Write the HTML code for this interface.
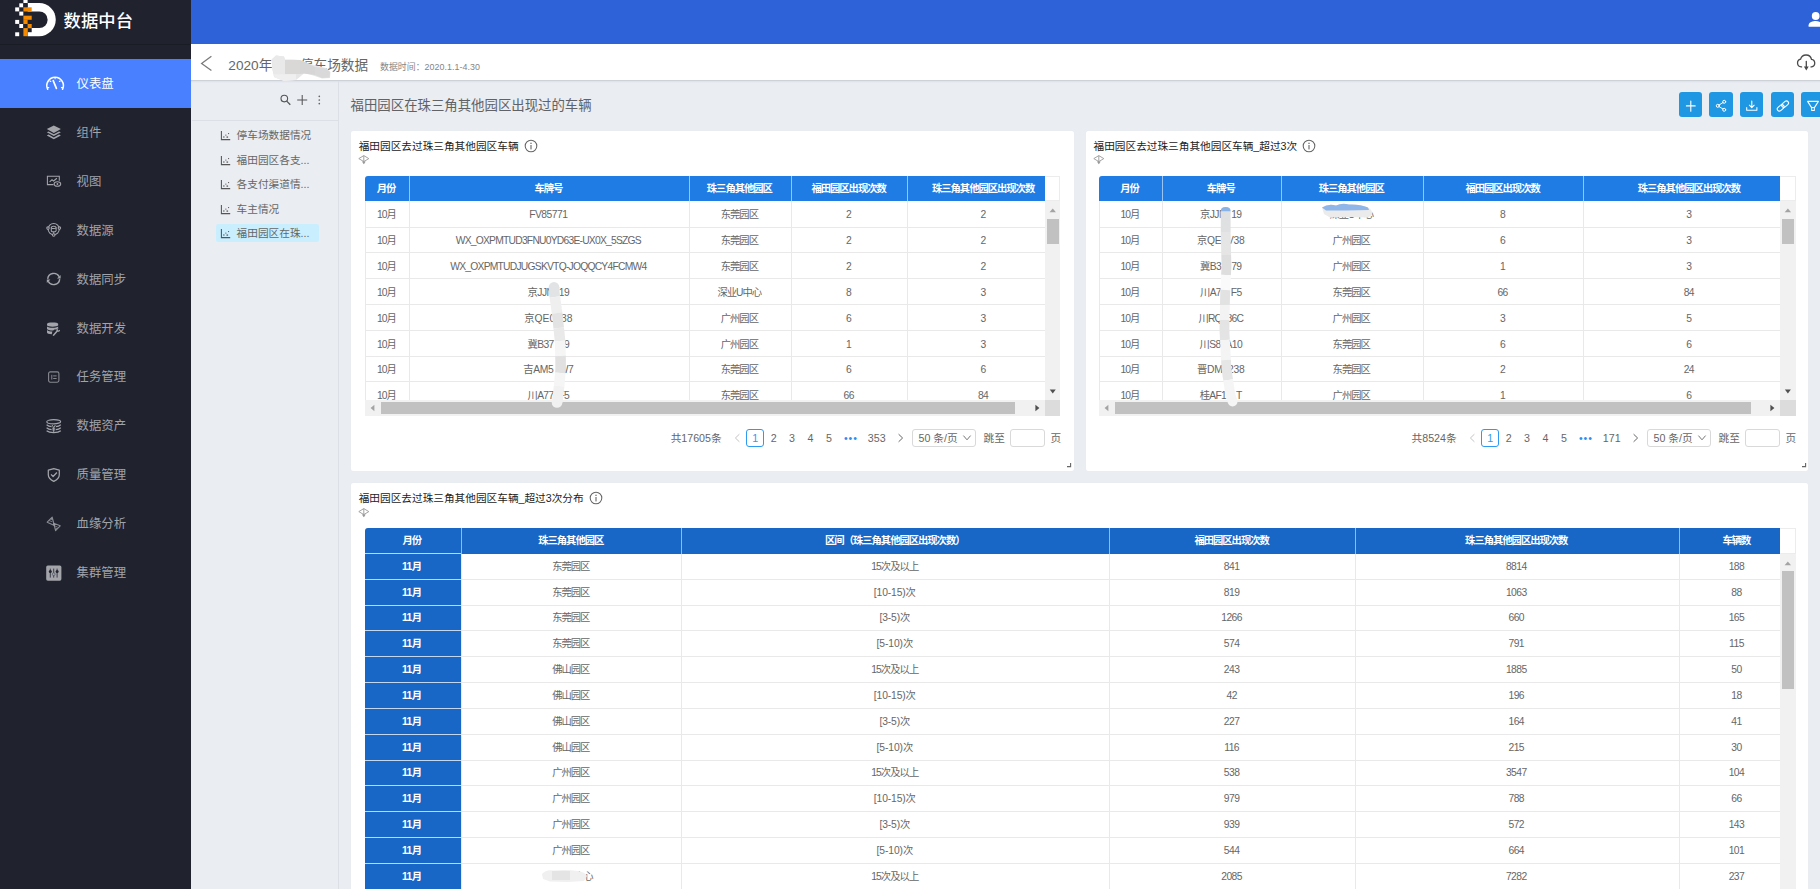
<!DOCTYPE html><html lang="zh-CN"><head><meta charset="utf-8"><title>数据中台</title><style>
*{box-sizing:border-box;margin:0;padding:0}
html,body{width:1820px;height:889px;overflow:hidden}
body{position:relative;background:#eaedf2;font-family:"Liberation Sans","Noto Sans CJK SC",sans-serif;color:#666;-webkit-font-smoothing:antialiased}
.abs{position:absolute}
#side{left:0;top:0;width:191px;height:889px;background:#20222e}
#logoline{left:0;top:44px;width:191px;height:1px;background:#191b25}
#logotxt{left:63.5px;top:7.5px;font-size:17.3px;line-height:26px;color:#fff;font-weight:500;letter-spacing:0.1px;white-space:nowrap}
.mi{left:0;width:191px;height:49px;color:#a1a3aa;font-size:12.4px;line-height:49px;white-space:nowrap}
.mi span{position:absolute;left:76.5px;top:1px}
.mi.on{background:#4880ff;color:#fff}
.mi svg{position:absolute;left:44px;top:14.5px;width:20px;height:20px;overflow:visible}
#top{left:191px;top:0;width:1629px;height:44px;background:#2e62d8}
#hdr{left:191px;top:44px;width:1629px;height:37px;background:#fff;border-bottom:1px solid #cdd1d8}
#hdrshadow{left:191px;top:81px;width:1629px;height:2px;background:linear-gradient(#dde0e6,#eaedf2)}
#ttl{left:228.3px;top:55.8px;font-size:13.65px;line-height:20px;color:#666;white-space:nowrap}
#ttl2{left:380px;top:59.6px;font-size:8.9px;line-height:14px;color:#858585;white-space:nowrap;letter-spacing:0.05px}
#sub{left:191px;top:81px;width:148px;height:808px;border-right:1px solid #dcdfe5}
#subline{left:192px;top:120px;width:146px;height:1px;background:#dcdfe5}
.si{left:216px;width:103px;height:18px;font-size:10.67px;line-height:18px;color:#666;white-space:nowrap;border-radius:2px}
.si.on{background:#c9efff}
.si svg{position:absolute;left:4px;top:4px;width:11px;height:11px;overflow:visible}
.si span{position:absolute;left:20.6px;top:0}
#mt{left:350.6px;top:95.9px;font-size:13.4px;line-height:20px;color:#606266;white-space:nowrap}
.btn{top:92.4px;width:23.6px;height:24.8px;border-radius:3px;background:#1f97e2}
.btn svg{position:absolute;left:0;top:0;width:100%;height:100%;overflow:visible}
.card{background:#fff;border-radius:2px;box-shadow:0 0 1px rgba(0,0,0,0.06)}
.ct{font-size:10.67px;line-height:16px;color:#222;white-space:nowrap}
.tb{overflow:hidden;font-size:10.3px;letter-spacing:-1px;color:#666}
.tb .l{letter-spacing:-0.55px}
.tb .r{position:absolute;left:0;border-bottom:1px solid #e9e9e9}
.tb .h{position:absolute;color:#fff;font-weight:bold;text-align:center;white-space:nowrap;overflow:hidden;padding-right:2.4px}
.tb .c{position:absolute;top:0;height:100%;text-align:center;white-space:nowrap;border-left:1px solid #e9e9e9;padding-right:2.4px}
.tb .c.b{color:#fff;font-weight:bold;border-left:0;height:calc(100% + 1px);border-bottom:1px solid #c3d6ef;letter-spacing:-0.45px}
.pg{font-size:10.67px;line-height:19.8px;color:#666;white-space:nowrap;height:17.6px}
.pg .it{position:absolute;top:0;text-align:center}
.smg{pointer-events:none}
</style></head><body>
<div id="side" class="abs"></div>
<div id="logoline" class="abs"></div>
<svg class="abs" style="left:0;top:0" width="64" height="44" viewBox="0 0 64 44">
<path d="M27.6 3.1H39.2A16.55 16.55 0 0 1 39.2 36.2H27.6Z" fill="#fff"/>
<path d="M23.3 11.4H39.3A8.3 8.3 0 0 1 39.3 28.1H23.3Z" fill="#20222e"/>
<g fill="#fff">
<rect x="23.4" y="-1" width="4.2" height="4.1"/>
<rect x="19.3" y="3.3" width="4" height="4"/>
<rect x="15.2" y="7.4" width="4" height="4"/>
<rect x="19.3" y="11.6" width="4" height="4"/>
<rect x="15.2" y="19.9" width="4" height="4"/>
<rect x="19.3" y="24" width="4" height="4"/>
<rect x="15.2" y="32.3" width="4" height="3.9"/>
</g>
<g fill="#20222e">
<rect x="23.4" y="3.1" width="4.2" height="4.2"/>
<rect x="27.6" y="28.1" width="4.1" height="4.1"/>
<rect x="23.4" y="24" width="4.2" height="4.1"/>
</g>
<g fill="#f58a00">
<rect x="23.4" y="7.3" width="8.3" height="4.2"/>
<rect x="23.4" y="15.7" width="8.3" height="4.1"/>
<rect x="23.4" y="19.8" width="4.2" height="4.2"/>
<rect x="27.6" y="24" width="4.1" height="4.1"/>
<rect x="23.4" y="28.1" width="4.2" height="8.1"/>
</g>
</svg>
<div id="logotxt" class="abs">数据中台</div>
<div class="abs mi on" style="top:59.0px"><svg viewBox="0 0 20 20"><g transform="translate(0.1,-0.6) scale(1,1)"><g fill="none" stroke="#fff" stroke-width="1.5" stroke-linecap="round"><path d="M3.55 15.9A8.3 8.3 0 1 1 18.45 15.9"/><path d="M9.1 7.3L12.3 15" stroke-width="1.7"/><path d="M11 4.3v1M5.8 7.6l.9.5M16.2 7.6l-.9.5M3.4 14.2h1.3M18.6 14.2h-1.3" stroke-width="1.1"/></g></g></svg><span>仪表盘</span></div>
<div class="abs mi" style="top:107.9px"><svg viewBox="0 0 20 20"><g transform="translate(0,2.1) scale(1,1)"><g fill="#a4a5ab"><path d="M9.8 1.4L16.9 5 9.8 8.8 2.8 5Z"/><path d="M2.8 8.2L4.6 7.3 9.8 10.1 15 7.3 16.9 8.2 9.8 12Z"/><path d="M2.8 11.4L4.6 10.5 9.8 13.3 15 10.5 16.9 11.4 9.8 15.2Z"/></g></g></svg><span>组件</span></div>
<div class="abs mi" style="top:156.8px"><svg viewBox="0 0 20 20"><g transform="translate(0,3.2) scale(1,1)"><g fill="none" stroke="#a4a5ab" stroke-width="1.05"><path d="M9.5 10.4H3.4V2.1H15.3V6.6"/><path d="M5.6 7.6L8 5.6 9.6 6.8 12.9 4.1" stroke-width="1.1"/><ellipse cx="13.4" cy="9.8" rx="3.3" ry="2.3"/><circle cx="13.4" cy="9.8" r="0.9" fill="#a4a5ab" stroke="none"/></g></g></svg><span>视图</span></div>
<div class="abs mi" style="top:205.7px"><svg viewBox="0 0 20 20"><g transform="translate(0,3.8) scale(1,1)"><g fill="none" stroke="#a4a5ab" stroke-width="1.05"><circle cx="9.7" cy="5.3" r="5.6"/><circle cx="4" cy="4.3" r="1.25" fill="#20222e"/><circle cx="15.4" cy="4.3" r="1.25" fill="#20222e"/><circle cx="9.7" cy="11.2" r="1.3" fill="#20222e"/><ellipse cx="9.7" cy="3.6" rx="2.4" ry="1.1"/><path d="M7.3 3.6V7A2.4 1.1 0 0 0 12.1 7V3.6M9.7 8.2V9.9"/></g></g></svg><span>数据源</span></div>
<div class="abs mi" style="top:254.6px"><svg viewBox="0 0 20 20"><g transform="translate(0,4.5) scale(1,1)"><g fill="none" stroke="#a4a5ab" stroke-width="1.4"><path d="M3.7 5.4A6.1 6.1 0 0 1 15.2 3.2"/><path d="M15.7 5.6A6.1 6.1 0 0 1 4.2 7.8"/></g><path d="M16.6 1.4V4.9H13Z" fill="#a4a5ab"/><path d="M2.8 9.6V6.1H6.4Z" fill="#a4a5ab"/></g></svg><span>数据同步</span></div>
<div class="abs mi" style="top:303.5px"><svg viewBox="0 0 20 20"><g transform="translate(0.2,4.5) scale(0.97,0.86)"><g fill="#a4a5ab"><path d="M2.9 1.6C2.9 -.6 14.4 -.6 14.4 1.6V3.2C14.4 5.4 2.9 5.4 2.9 3.2Z"/><path d="M2.9 4.6C4.6 6.7 12.7 6.7 14.4 4.6V6.6C13.6 7.6 11.6 8 10.6 8.2L9.2 9.3C6 9.3 2.9 8.6 2.9 7.2Z"/><path d="M2.9 8.6C4 9.9 6.4 10.4 8.4 10.4L7.8 13.6C5 13.5 2.9 12.7 2.9 11.6Z"/><path d="M8.6 14.9L12.6 9.6C12 8 13.4 6.6 14.8 6.9L13.7 8.4 14.7 9.4 16.3 8.3C16.7 9.9 15.2 11.2 13.8 10.7L9.9 15.8Z"/></g></g></svg><span>数据开发</span></div>
<div class="abs mi" style="top:352.4px"><svg viewBox="0 0 20 20"><g transform="translate(0,6.6) scale(1,1)"><g fill="none" stroke="#a4a5ab" stroke-opacity=".78" stroke-width="1.2"><rect x="4.6" y="-1.7" width="10.3" height="10.3" rx="1.6" stroke-width="1.1"/><path d="M9.2 2.3H12.6M9.2 4.9H12.6M7.8 1.2V6" stroke-width="1"/></g></g></svg><span>任务管理</span></div>
<div class="abs mi" style="top:401.3px"><svg viewBox="0 0 20 20"><g transform="translate(0,7.6) scale(1,1)"><g fill="none" stroke="#a4a5ab" stroke-width="1.2"><ellipse cx="9.7" cy="-1.9" rx="6.9" ry="2.1"/><path d="M2.6 1.2C4.4 2.7 6.4 3 7.6 3.1M16.8 1.2C15 2.7 13 3 11.8 3.1M2.6 4.2C4.4 5.7 6.4 6 7.6 6.1M16.8 4.2C15 5.7 13 6 11.8 6.1M2.6 7.2C5.6 9.6 13.8 9.6 16.8 7.2"/><path d="M8 1.4L9.7 4 11.4 1.4M9.7 4V8.4M8.2 4.6H11.2M8.2 6.3H11.2" stroke-width="1"/></g></g></svg><span>数据资产</span></div>
<div class="abs mi" style="top:450.2px"><svg viewBox="0 0 20 20"><g transform="translate(0,6.4) scale(1,1)"><g fill="none" stroke="#a4a5ab" stroke-width="1.25" stroke-linejoin="round"><path d="M9.8 -2.7L15.3 -1.2V3.4C15.3 6.6 12.6 8.7 9.8 10 7 8.7 4.3 6.6 4.3 3.4V-1.2Z"/><path d="M7 3L9.1 5.1 12.9 1.1"/></g></g></svg><span>质量管理</span></div>
<div class="abs mi" style="top:499.1px"><svg viewBox="0 0 20 20"><g transform="translate(0,3) scale(1,1)"><g fill="none" stroke="#a4a5ab" stroke-opacity=".8" stroke-width="1.1" stroke-linejoin="round"><path d="M3.2 5.2L8.2 .2 10.4 8.6Z"/><path d="M9.6 6.2L16.2 8.8 11.6 13.6Z"/><path d="M5.2 3.6L8.4 4.8M6.6 2.2L8.8 2.9M11 9L13.6 10.2M11.6 11.2L13 11.8" stroke-width=".8"/></g></g></svg><span>血缘分析</span></div>
<div class="abs mi" style="top:548.0px"><svg viewBox="0 0 20 20"><g transform="translate(0,3) scale(1,1)"><rect x="2.2" y="-.5" width="15.2" height="15.2" rx="1.6" fill="#a4a5ab"/><g stroke="#3a3c48" stroke-width="1" fill="none"><path d="M6.3 2.6V11.6M9.7 2.6V11.6M13.1 2.6V11.6"/></g><circle cx="6.3" cy="5.4" r="1.5" fill="#23252f"/><circle cx="13.1" cy="5.4" r="1.5" fill="#23252f"/><circle cx="9.7" cy="8.2" r="1.4" fill="#9fa3ad" stroke="#4a4c58" stroke-width=".6"/></g></svg><span>集群管理</span></div>
<div id="top" class="abs"></div>
<svg class="abs" style="left:1800px;top:8px" width="20" height="24" viewBox="0 0 20 24"><circle cx="15.7" cy="8" r="3.9" fill="#fff"/><path d="M8.6 18.7V17.2C8.6 14.3 13 13 15.7 13 18.4 13 22.8 14.3 22.8 17.2V18.7Z" fill="#fff"/></svg>
<div id="hdr" class="abs"></div><div id="hdrshadow" class="abs"></div>
<svg class="abs" style="left:198px;top:52px" width="18" height="22" viewBox="0 0 18 22"><path d="M13.4 4.2L3.6 11.4 13.4 18.6" fill="none" stroke="#7a7a7a" stroke-width="1.25"/></svg>
<div id="ttl" class="abs">2020年<span style="display:inline-block;width:27.6px"></span>停车场数据</div>
<div id="ttl2" class="abs">数据时间：2020.1.1-4.30</div>
<svg class="abs smg" style="left:266px;top:50px" width="70" height="34" viewBox="0 0 70 34"><path d="M5.5 9.5L10 5.5 18 6.5 19 9.5 27 9.5 34 10 44 14 60 18 64.5 22 64 28 56 28.5 44 24.5 38 23.5 30 30 18 31 8 27 6.5 20Z" fill="#e6e6e6"/><path d="M19 10H34L34 24 19 24Z" fill="#d9d8d7"/><path d="M34 10L44 14.5 49 17 49 25 38 23.5 34 24Z" fill="#d6d6d6"/><path d="M49 17L60 18.5 64 22 63.5 27.5 56 28 49 25Z" fill="#d9d9da"/><path d="M18 24.2H30L30 30 18 31 8.5 27.2 8 24.2Z" fill="#efefef"/><path d="M6 9.5L10 5.5 18 6.5 19 10 19 24 8 24 6.5 20Z" fill="#e9e9e9"/></svg>
<svg class="abs" style="left:1794px;top:52px" width="24" height="22" viewBox="0 0 24 22"><g fill="none" stroke="#4a4a4a" stroke-width="1.3" stroke-linecap="round"><path d="M7.6 14.9H7.2A3.9 3.9 0 0 1 6.6 7.2 5.6 5.6 0 0 1 17.5 7.4 3.8 3.8 0 0 1 17.6 14.9H17"/><path d="M12.3 9.4V16.2"/></g><path d="M9.9 14.6H14.7L12.3 18.4Z" fill="#4a4a4a"/></svg>
<div id="sub" class="abs"></div><div id="subline" class="abs"></div>
<svg class="abs" style="left:278px;top:92px" width="48" height="16" viewBox="0 0 48 16"><g fill="none" stroke="#555" stroke-width="1.1"><circle cx="6.3" cy="6.6" r="3.3"/><path d="M8.7 9.1L12.3 12.8" stroke-width="1.3"/><path d="M19.2 8H29.2M24.2 3V13" stroke-width="1.05"/></g><g fill="#666"><circle cx="41.3" cy="4.3" r=".85"/><circle cx="41.3" cy="8" r=".85"/><circle cx="41.3" cy="11.6" r=".85"/></g></svg>
<div class="abs si" style="top:126.4px"><svg viewBox="0 0 11 11"><path d="M1.4 1V9.6H10.2" fill="none" stroke="#555" stroke-width="1.05"/><g fill="#666"><rect x="3.3" y="6.2" width="1.1" height="1.6"/><rect x="5.3" y="4.6" width="1.1" height="1.1"/><rect x="6.5" y="6.4" width="1.6" height="1.4"/><rect x="8" y="3" width="1.1" height="1.1"/></g></svg><span>停车场数据情况</span></div>
<div class="abs si" style="top:150.9px"><svg viewBox="0 0 11 11"><path d="M1.4 1V9.6H10.2" fill="none" stroke="#555" stroke-width="1.05"/><g fill="#666"><rect x="3.3" y="6.2" width="1.1" height="1.6"/><rect x="5.3" y="4.6" width="1.1" height="1.1"/><rect x="6.5" y="6.4" width="1.6" height="1.4"/><rect x="8" y="3" width="1.1" height="1.1"/></g></svg><span>福田园区各支...</span></div>
<div class="abs si" style="top:175.4px"><svg viewBox="0 0 11 11"><path d="M1.4 1V9.6H10.2" fill="none" stroke="#555" stroke-width="1.05"/><g fill="#666"><rect x="3.3" y="6.2" width="1.1" height="1.6"/><rect x="5.3" y="4.6" width="1.1" height="1.1"/><rect x="6.5" y="6.4" width="1.6" height="1.4"/><rect x="8" y="3" width="1.1" height="1.1"/></g></svg><span>各支付渠道情...</span></div>
<div class="abs si" style="top:199.9px"><svg viewBox="0 0 11 11"><path d="M1.4 1V9.6H10.2" fill="none" stroke="#555" stroke-width="1.05"/><g fill="#666"><rect x="3.3" y="6.2" width="1.1" height="1.6"/><rect x="5.3" y="4.6" width="1.1" height="1.1"/><rect x="6.5" y="6.4" width="1.6" height="1.4"/><rect x="8" y="3" width="1.1" height="1.1"/></g></svg><span>车主情况</span></div>
<div class="abs si on" style="top:224.4px"><svg viewBox="0 0 11 11"><path d="M1.4 1V9.6H10.2" fill="none" stroke="#555" stroke-width="1.05"/><g fill="#666"><rect x="3.3" y="6.2" width="1.1" height="1.6"/><rect x="5.3" y="4.6" width="1.1" height="1.1"/><rect x="6.5" y="6.4" width="1.6" height="1.4"/><rect x="8" y="3" width="1.1" height="1.1"/></g></svg><span>福田园区在珠...</span></div>
<div id="mt" class="abs">福田园区在珠三角其他园区出现过的车辆</div>
<div class="abs btn" style="left:1678.7px"><svg viewBox="0 0 23.6 24.8"><g fill="none" stroke="#fff" stroke-linecap="round" stroke-linejoin="round"><path d="M7.4 13.9H16.2M11.8 9V19.2" stroke-width="1.1"/></g></svg></div>
<div class="abs btn" style="left:1709.3px"><svg viewBox="0 0 23.6 24.8"><g fill="none" stroke="#fff" stroke-linecap="round" stroke-linejoin="round"><g stroke-width="1"><circle cx="8.8" cy="13.8" r="1.5"/><circle cx="15.2" cy="9.8" r="1.5"/><circle cx="15.2" cy="17.8" r="1.5"/><path d="M10.1 13L13.9 10.6M10.1 14.6L13.9 17"/></g></g></svg></div>
<div class="abs btn" style="left:1739.9px"><svg viewBox="0 0 23.6 24.8"><g fill="none" stroke="#fff" stroke-linecap="round" stroke-linejoin="round"><g stroke-width="1.05"><path d="M11.8 9V15.3M9.4 13.2L11.8 15.6 14.2 13.2"/><path d="M6.7 15.6V18.2H16.9V15.6"/></g></g></svg></div>
<div class="abs btn" style="left:1770.5px"><svg viewBox="0 0 23.6 24.8"><g fill="none" stroke="#fff" stroke-linecap="round" stroke-linejoin="round"><g stroke-width="1.1" transform="rotate(-40 11.9 14)"><rect x="5.2" y="11.9" width="7.6" height="4.2" rx="2.1"/><rect x="11" y="11.9" width="7.6" height="4.2" rx="2.1"/></g></g></svg></div>
<div class="abs btn" style="left:1801.1px"><svg viewBox="0 0 23.6 24.8"><g fill="none" stroke="#fff" stroke-linecap="round" stroke-linejoin="round"><g stroke-width="1.05"><path d="M6.6 9.4H17.4L13.4 15.6H10.6Z"/><path d="M10.7 15.6V18.6H13.3V15.6"/></g></g></svg></div>
<div class="abs card" style="left:351px;top:130.6px;width:722.8px;height:340.4px"></div>
<div class="abs ct" style="left:358.7px;top:138.2px">福田园区去过珠三角其他园区车辆</div>
<svg class="abs" style="left:524.3px;top:139.3px" width="14" height="14" viewBox="0 0 14 14"><circle cx="7" cy="7" r="5.8" fill="none" stroke="#666" stroke-width="1.05"/><rect x="6.45" y="6" width="1.1" height="4.4" fill="#666"/><rect x="6.4" y="3.7" width="1.2" height="1.3" fill="#666"/></svg>
<svg class="abs" style="left:358.4px;top:155.4px" width="12" height="10" viewBox="0 0 12 10"><g fill="none" stroke="#999" stroke-width=".9"><path d="M.8 3.6L5.8 .6 10.8 3.6 5.8 6.6Z"/><path d="M5.8 .6V8.4"/></g><path d="M3.9 6.6H7.7L5.8 9.2Z" fill="#999"/></svg>
<div class="abs tb" style="left:364.8px;top:176.4px;width:695.6px;height:239.9px">
<div class="abs" style="left:0;top:0;width:695.6px;height:25px;border:1px solid #ececec;background:#fff"></div>
<div class="abs" style="left:0;top:0;width:695.6px;height:4px;background:#fff"></div>
<div class="abs" style="left:0;top:0;width:695.6px;height:25px;border:1px solid #ececec;border-left:0;border-bottom:0;border-radius:3px 0 0 0"></div>
<div class="abs" style="left:0;top:0;width:680.2px;height:25px;background:#1e7ce4;border-radius:3px 0 0 0"></div>
<div class="h" style="left:0.0px;top:0;width:44.7px;height:25px;line-height:26.4px;">月份</div>
<div class="h" style="left:44.7px;top:0;width:279.1px;height:25px;line-height:26.4px;border-left:1px solid rgba(255,255,255,.55);">车牌号</div>
<div class="h" style="left:323.8px;top:0;width:102.9px;height:25px;line-height:26.4px;border-left:1px solid rgba(255,255,255,.55);">珠三角其他园区</div>
<div class="h" style="left:426.7px;top:0;width:115.7px;height:25px;line-height:26.4px;border-left:1px solid rgba(255,255,255,.55);">福田园区出现次数</div>
<div class="h" style="left:542.4px;top:0;width:153.2px;height:25px;line-height:26.4px;border-left:1px solid rgba(255,255,255,.55);">珠三角其他园区出现次数</div>
<div class="abs" style="left:0;top:25px;width:680.2px;height:198.9px;overflow:hidden;background:#fff">
<div class="r" style="top:0.00px;width:680.2px;height:26.60px;line-height:27.80px">
<div class="c" style="left:0.0px;width:44.7px;">10月</div>
<div class="c" style="left:44.7px;width:279.1px;"><span style="letter-spacing:-0.5px">FV85771</span></div>
<div class="c" style="left:323.8px;width:102.9px;">东莞园区</div>
<div class="c" style="left:426.7px;width:115.7px;"><span class="l">2</span></div>
<div class="c" style="left:542.4px;width:153.2px;"><span class="l">2</span></div>
</div>
<div class="r" style="top:26.60px;width:680.2px;height:25.00px;line-height:26.20px">
<div class="c" style="left:0.0px;width:44.7px;">10月</div>
<div class="c" style="left:44.7px;width:279.1px;"><span style="letter-spacing:-0.76px">WX_OXPMTUD3FNU0YD63E-UX0X_5SZGS</span></div>
<div class="c" style="left:323.8px;width:102.9px;">东莞园区</div>
<div class="c" style="left:426.7px;width:115.7px;"><span class="l">2</span></div>
<div class="c" style="left:542.4px;width:153.2px;"><span class="l">2</span></div>
</div>
<div class="r" style="top:51.60px;width:680.2px;height:26.00px;line-height:27.20px">
<div class="c" style="left:0.0px;width:44.7px;">10月</div>
<div class="c" style="left:44.7px;width:279.1px;"><span style="letter-spacing:-0.76px">WX_OXPMTUDJUGSKVTQ-JOQQCY4FCMW4</span></div>
<div class="c" style="left:323.8px;width:102.9px;">东莞园区</div>
<div class="c" style="left:426.7px;width:115.7px;"><span class="l">2</span></div>
<div class="c" style="left:542.4px;width:153.2px;"><span class="l">2</span></div>
</div>
<div class="r" style="top:77.60px;width:680.2px;height:26.00px;line-height:27.20px">
<div class="c" style="left:0.0px;width:44.7px;">10月</div>
<div class="c" style="left:44.7px;width:279.1px;"><span style="letter-spacing:-0.5px">京JJN 19</span></div>
<div class="c" style="left:323.8px;width:102.9px;">深业U中心</div>
<div class="c" style="left:426.7px;width:115.7px;"><span class="l">8</span></div>
<div class="c" style="left:542.4px;width:153.2px;"><span class="l">3</span></div>
</div>
<div class="r" style="top:103.60px;width:680.2px;height:26.00px;line-height:27.20px">
<div class="c" style="left:0.0px;width:44.7px;">10月</div>
<div class="c" style="left:44.7px;width:279.1px;"><span style="letter-spacing:0px">京QE0 38</span></div>
<div class="c" style="left:323.8px;width:102.9px;">广州园区</div>
<div class="c" style="left:426.7px;width:115.7px;"><span class="l">6</span></div>
<div class="c" style="left:542.4px;width:153.2px;"><span class="l">3</span></div>
</div>
<div class="r" style="top:129.60px;width:680.2px;height:26.00px;line-height:27.20px">
<div class="c" style="left:0.0px;width:44.7px;">10月</div>
<div class="c" style="left:44.7px;width:279.1px;"><span style="letter-spacing:-0.6px">冀B37  9</span></div>
<div class="c" style="left:323.8px;width:102.9px;">广州园区</div>
<div class="c" style="left:426.7px;width:115.7px;"><span class="l">1</span></div>
<div class="c" style="left:542.4px;width:153.2px;"><span class="l">3</span></div>
</div>
<div class="r" style="top:155.60px;width:680.2px;height:25.00px;line-height:26.20px">
<div class="c" style="left:0.0px;width:44.7px;">10月</div>
<div class="c" style="left:44.7px;width:279.1px;"><span style="letter-spacing:-0.36px">吉AM5 W7</span></div>
<div class="c" style="left:323.8px;width:102.9px;">东莞园区</div>
<div class="c" style="left:426.7px;width:115.7px;"><span class="l">6</span></div>
<div class="c" style="left:542.4px;width:153.2px;"><span class="l">6</span></div>
</div>
<div class="r" style="top:180.60px;width:680.2px;height:26.00px;line-height:27.20px">
<div class="c" style="left:0.0px;width:44.7px;">10月</div>
<div class="c" style="left:44.7px;width:279.1px;"><span style="letter-spacing:-0.68px">川A77 F5</span></div>
<div class="c" style="left:323.8px;width:102.9px;">东莞园区</div>
<div class="c" style="left:426.7px;width:115.7px;"><span class="l">66</span></div>
<div class="c" style="left:542.4px;width:153.2px;"><span class="l">84</span></div>
</div>
</div>
<div class="abs" style="left:680.2px;top:25px;width:15.4px;height:198.9px;background:#f1f1f1"></div>
<svg class="abs" style="left:680.2px;top:25px" width="15.4" height="16" viewBox="0 0 15.5 16"><path d="M4.6 11.2L7.8 7.6 11 11.2Z" fill="#a3a3a3"/></svg>
<div class="abs" style="left:682.2px;top:42.6px;width:11.8px;height:25.0px;background:#c1c1c1"></div>
<svg class="abs" style="left:680.2px;top:207.9px" width="15.4" height="16" viewBox="0 0 15.5 16"><path d="M4.8 5.6H10.8L7.8 9.4Z" fill="#505050"/></svg>
<div class="abs" style="left:0;top:223.9px;width:695.6px;height:16px;background:#f1f1f1"></div>
<div class="abs" style="left:680.2px;top:223.9px;width:15.4px;height:16px;background:#dcdcdc"></div>
<div class="abs" style="left:16.2px;top:225.9px;width:634.2px;height:12.2px;background:#c1c1c1"></div>
<svg class="abs" style="left:0;top:223.9px" width="16" height="16" viewBox="0 0 16 16"><path d="M9.4 4.8V11.2L5.6 8Z" fill="#a3a3a3"/></svg>
<svg class="abs" style="left:664.2px;top:223.9px" width="16" height="16" viewBox="0 0 16 16"><path d="M6.4 4.8V11.2L10.4 8Z" fill="#505050"/></svg>
</div>
<div class="abs pg" style="left:0.0px;top:429px;width:1070px">
<div class="it" style="left:661.6px;width:60px;text-align:right">共17605条</div>
<svg class="abs" style="left:733px;top:3.8px" width="9" height="10" viewBox="0 0 9 10"><path d="M6.4 1.2L2.4 5 6.4 8.8" fill="none" stroke="#c4c4c4" stroke-width="1"/></svg>
<div class="it" style="left:746.3px;width:18.0px;height:17.6px;border:1px solid #2d9bf0;border-radius:3px;color:#2d9bf0;line-height:17.6px">1</div>
<div class="it" style="left:764.8px;width:18.0px;">2</div>
<div class="it" style="left:783.0px;width:18.0px;">3</div>
<div class="it" style="left:801.5px;width:18.0px;">4</div>
<div class="it" style="left:820.0px;width:18.0px;">5</div>
<div class="it" style="left:838.4px;width:24.0px;color:#2d8cf0;font-size:10.5px;letter-spacing:1px;text-indent:1px;line-height:18.6px">•••</div>
<div class="it" style="left:862.7px;width:28.0px;">353</div>
<svg class="abs" style="left:896px;top:3.8px" width="9" height="10" viewBox="0 0 9 10"><path d="M2.6 1.2L6.6 5 2.6 8.8" fill="none" stroke="#666" stroke-width="1"/></svg>
<div class="it" style="left:912.3px;width:64.2px;height:17.6px;border:1px solid #d9d9d9;border-radius:3px;text-align:left;padding-left:5.2px;line-height:17.8px">50 条/页</div>
<svg class="abs" style="left:962px;top:5px" width="10" height="8" viewBox="0 0 10 8"><path d="M1.4 1.6L5 5.8 8.6 1.6" fill="none" stroke="#777" stroke-width="1"/></svg>
<div class="it" style="left:983.2px;width:22.0px;">跳至</div>
<div class="it" style="left:1010.4px;width:34.2px;height:17.6px;border:1px solid #d9d9d9;border-radius:3px"></div>
<div class="it" style="left:1050.4px;width:11.0px;">页</div>
</div>
<svg class="abs" style="left:1066px;top:462px" width="6" height="6" viewBox="0 0 6 6"><path d="M4.6 1V4.6H1" fill="none" stroke="#666" stroke-width="1.1"/></svg>
<div class="abs card" style="left:1085.8px;top:130.6px;width:722.6px;height:340.4px"></div>
<div class="abs ct" style="left:1093.5px;top:138.2px">福田园区去过珠三角其他园区车辆_超过3次</div>
<svg class="abs" style="left:1302.2px;top:139.3px" width="14" height="14" viewBox="0 0 14 14"><circle cx="7" cy="7" r="5.8" fill="none" stroke="#666" stroke-width="1.05"/><rect x="6.45" y="6" width="1.1" height="4.4" fill="#666"/><rect x="6.4" y="3.7" width="1.2" height="1.3" fill="#666"/></svg>
<svg class="abs" style="left:1093.2px;top:155.4px" width="12" height="10" viewBox="0 0 12 10"><g fill="none" stroke="#999" stroke-width=".9"><path d="M.8 3.6L5.8 .6 10.8 3.6 5.8 6.6Z"/><path d="M5.8 .6V8.4"/></g><path d="M3.9 6.6H7.7L5.8 9.2Z" fill="#999"/></svg>
<div class="abs tb" style="left:1099px;top:176.4px;width:696.7px;height:239.9px">
<div class="abs" style="left:0;top:0;width:696.7px;height:25px;border:1px solid #ececec;background:#fff"></div>
<div class="abs" style="left:0;top:0;width:696.7px;height:4px;background:#fff"></div>
<div class="abs" style="left:0;top:0;width:696.7px;height:25px;border:1px solid #ececec;border-left:0;border-bottom:0;border-radius:3px 0 0 0"></div>
<div class="abs" style="left:0;top:0;width:681.0px;height:25px;background:#1e7ce4;border-radius:3px 0 0 0"></div>
<div class="h" style="left:0.0px;top:0;width:63.3px;height:25px;line-height:26.4px;">月份</div>
<div class="h" style="left:63.3px;top:0;width:118.3px;height:25px;line-height:26.4px;border-left:1px solid rgba(255,255,255,.55);">车牌号</div>
<div class="h" style="left:181.6px;top:0;width:142.6px;height:25px;line-height:26.4px;border-left:1px solid rgba(255,255,255,.55);">珠三角其他园区</div>
<div class="h" style="left:324.2px;top:0;width:160.2px;height:25px;line-height:26.4px;border-left:1px solid rgba(255,255,255,.55);">福田园区出现次数</div>
<div class="h" style="left:484.4px;top:0;width:212.3px;height:25px;line-height:26.4px;border-left:1px solid rgba(255,255,255,.55);">珠三角其他园区出现次数</div>
<div class="abs" style="left:0;top:25px;width:681.0px;height:198.9px;overflow:hidden;background:#fff">
<div class="r" style="top:0.00px;width:681.0px;height:26.60px;line-height:27.80px">
<div class="c" style="left:0.0px;width:63.3px;">10月</div>
<div class="c" style="left:63.3px;width:118.3px;"><span style="letter-spacing:-0.5px">京JJN 19</span></div>
<div class="c" style="left:181.6px;width:142.6px;">深业U中心</div>
<div class="c" style="left:324.2px;width:160.2px;"><span class="l">8</span></div>
<div class="c" style="left:484.4px;width:212.3px;"><span class="l">3</span></div>
</div>
<div class="r" style="top:26.60px;width:681.0px;height:25.00px;line-height:26.20px">
<div class="c" style="left:0.0px;width:63.3px;">10月</div>
<div class="c" style="left:63.3px;width:118.3px;"><span style="letter-spacing:-0.24px">京QE V38</span></div>
<div class="c" style="left:181.6px;width:142.6px;">广州园区</div>
<div class="c" style="left:324.2px;width:160.2px;"><span class="l">6</span></div>
<div class="c" style="left:484.4px;width:212.3px;"><span class="l">3</span></div>
</div>
<div class="r" style="top:51.60px;width:681.0px;height:26.00px;line-height:27.20px">
<div class="c" style="left:0.0px;width:63.3px;">10月</div>
<div class="c" style="left:63.3px;width:118.3px;"><span style="letter-spacing:-0.62px">冀B3  79</span></div>
<div class="c" style="left:181.6px;width:142.6px;">广州园区</div>
<div class="c" style="left:324.2px;width:160.2px;"><span class="l">1</span></div>
<div class="c" style="left:484.4px;width:212.3px;"><span class="l">3</span></div>
</div>
<div class="r" style="top:77.60px;width:681.0px;height:26.00px;line-height:27.20px">
<div class="c" style="left:0.0px;width:63.3px;">10月</div>
<div class="c" style="left:63.3px;width:118.3px;"><span style="letter-spacing:-0.71px">川A7  F5</span></div>
<div class="c" style="left:181.6px;width:142.6px;">东莞园区</div>
<div class="c" style="left:324.2px;width:160.2px;"><span class="l">66</span></div>
<div class="c" style="left:484.4px;width:212.3px;"><span class="l">84</span></div>
</div>
<div class="r" style="top:103.60px;width:681.0px;height:26.00px;line-height:27.20px">
<div class="c" style="left:0.0px;width:63.3px;">10月</div>
<div class="c" style="left:63.3px;width:118.3px;"><span style="letter-spacing:-0.83px">川RQ 86C</span></div>
<div class="c" style="left:181.6px;width:142.6px;">广州园区</div>
<div class="c" style="left:324.2px;width:160.2px;"><span class="l">3</span></div>
<div class="c" style="left:484.4px;width:212.3px;"><span class="l">5</span></div>
</div>
<div class="r" style="top:129.60px;width:681.0px;height:26.00px;line-height:27.20px">
<div class="c" style="left:0.0px;width:63.3px;">10月</div>
<div class="c" style="left:63.3px;width:118.3px;"><span style="letter-spacing:-0.64px">川S8 A10</span></div>
<div class="c" style="left:181.6px;width:142.6px;">东莞园区</div>
<div class="c" style="left:324.2px;width:160.2px;"><span class="l">6</span></div>
<div class="c" style="left:484.4px;width:212.3px;"><span class="l">6</span></div>
</div>
<div class="r" style="top:155.60px;width:681.0px;height:25.00px;line-height:26.20px">
<div class="c" style="left:0.0px;width:63.3px;">10月</div>
<div class="c" style="left:63.3px;width:118.3px;"><span style="letter-spacing:-0.24px">晋DM 238</span></div>
<div class="c" style="left:181.6px;width:142.6px;">东莞园区</div>
<div class="c" style="left:324.2px;width:160.2px;"><span class="l">2</span></div>
<div class="c" style="left:484.4px;width:212.3px;"><span class="l">24</span></div>
</div>
<div class="r" style="top:180.60px;width:681.0px;height:26.00px;line-height:27.20px">
<div class="c" style="left:0.0px;width:63.3px;">10月</div>
<div class="c" style="left:63.3px;width:118.3px;"><span style="letter-spacing:-0.72px">桂AF1  T</span></div>
<div class="c" style="left:181.6px;width:142.6px;">广州园区</div>
<div class="c" style="left:324.2px;width:160.2px;"><span class="l">1</span></div>
<div class="c" style="left:484.4px;width:212.3px;"><span class="l">6</span></div>
</div>
</div>
<div class="abs" style="left:681.0px;top:25px;width:15.7px;height:198.9px;background:#f1f1f1"></div>
<svg class="abs" style="left:681.0px;top:25px" width="15.7" height="16" viewBox="0 0 15.5 16"><path d="M4.6 11.2L7.8 7.6 11 11.2Z" fill="#a3a3a3"/></svg>
<div class="abs" style="left:683.0px;top:42.6px;width:12.1px;height:25.0px;background:#c1c1c1"></div>
<svg class="abs" style="left:681.0px;top:207.9px" width="15.7" height="16" viewBox="0 0 15.5 16"><path d="M4.8 5.6H10.8L7.8 9.4Z" fill="#505050"/></svg>
<div class="abs" style="left:0;top:223.9px;width:696.7px;height:16px;background:#f1f1f1"></div>
<div class="abs" style="left:681.0px;top:223.9px;width:15.7px;height:16px;background:#dcdcdc"></div>
<div class="abs" style="left:16.2px;top:225.9px;width:635.8px;height:12.2px;background:#c1c1c1"></div>
<svg class="abs" style="left:0;top:223.9px" width="16" height="16" viewBox="0 0 16 16"><path d="M9.4 4.8V11.2L5.6 8Z" fill="#a3a3a3"/></svg>
<svg class="abs" style="left:665.0px;top:223.9px" width="16" height="16" viewBox="0 0 16 16"><path d="M6.4 4.8V11.2L10.4 8Z" fill="#505050"/></svg>
</div>
<div class="abs pg" style="left:735.0px;top:429px;width:1070px">
<div class="it" style="left:661.6px;width:60px;text-align:right">共8524条</div>
<svg class="abs" style="left:733px;top:3.8px" width="9" height="10" viewBox="0 0 9 10"><path d="M6.4 1.2L2.4 5 6.4 8.8" fill="none" stroke="#c4c4c4" stroke-width="1"/></svg>
<div class="it" style="left:746.3px;width:18.0px;height:17.6px;border:1px solid #2d9bf0;border-radius:3px;color:#2d9bf0;line-height:17.6px">1</div>
<div class="it" style="left:764.8px;width:18.0px;">2</div>
<div class="it" style="left:783.0px;width:18.0px;">3</div>
<div class="it" style="left:801.5px;width:18.0px;">4</div>
<div class="it" style="left:820.0px;width:18.0px;">5</div>
<div class="it" style="left:838.4px;width:24.0px;color:#2d8cf0;font-size:10.5px;letter-spacing:1px;text-indent:1px;line-height:18.6px">•••</div>
<div class="it" style="left:862.7px;width:28.0px;">171</div>
<svg class="abs" style="left:896px;top:3.8px" width="9" height="10" viewBox="0 0 9 10"><path d="M2.6 1.2L6.6 5 2.6 8.8" fill="none" stroke="#666" stroke-width="1"/></svg>
<div class="it" style="left:912.3px;width:64.2px;height:17.6px;border:1px solid #d9d9d9;border-radius:3px;text-align:left;padding-left:5.2px;line-height:17.8px">50 条/页</div>
<svg class="abs" style="left:962px;top:5px" width="10" height="8" viewBox="0 0 10 8"><path d="M1.4 1.6L5 5.8 8.6 1.6" fill="none" stroke="#777" stroke-width="1"/></svg>
<div class="it" style="left:983.2px;width:22.0px;">跳至</div>
<div class="it" style="left:1010.4px;width:34.2px;height:17.6px;border:1px solid #d9d9d9;border-radius:3px"></div>
<div class="it" style="left:1050.4px;width:11.0px;">页</div>
</div>
<svg class="abs" style="left:1800.6px;top:462px" width="6" height="6" viewBox="0 0 6 6"><path d="M4.6 1V4.6H1" fill="none" stroke="#666" stroke-width="1.1"/></svg>
<div class="abs card" style="left:351px;top:482.7px;width:1457.4px;height:420px"></div>
<div class="abs ct" style="left:358.7px;top:490.3px">福田园区去过珠三角其他园区车辆_超过3次分布</div>
<svg class="abs" style="left:588.6px;top:491.4px" width="14" height="14" viewBox="0 0 14 14"><circle cx="7" cy="7" r="5.8" fill="none" stroke="#666" stroke-width="1.05"/><rect x="6.45" y="6" width="1.1" height="4.4" fill="#666"/><rect x="6.4" y="3.7" width="1.2" height="1.3" fill="#666"/></svg>
<svg class="abs" style="left:358.4px;top:507.5px" width="12" height="10" viewBox="0 0 12 10"><g fill="none" stroke="#999" stroke-width=".9"><path d="M.8 3.6L5.8 .6 10.8 3.6 5.8 6.6Z"/><path d="M5.8 .6V8.4"/></g><path d="M3.9 6.6H7.7L5.8 9.2Z" fill="#999"/></svg>
<div class="abs tb" style="left:364.6px;top:528px;width:1431.0px;height:372.0px">
<div class="abs" style="left:0;top:0;width:1431.0px;height:25.5px;border:1px solid #ececec;background:#fff"></div>
<div class="abs" style="left:0;top:0;width:1431.0px;height:4px;background:#fff"></div>
<div class="abs" style="left:0;top:0;width:1431.0px;height:25.5px;border:1px solid #ececec;border-left:0;border-bottom:0;border-radius:3px 0 0 0"></div>
<div class="abs" style="left:0;top:0;width:1415.4px;height:25.5px;background:#1867c6;border-radius:3px 0 0 0"></div>
<div class="abs" style="left:0;top:24.5px;width:96.8px;height:1px;background:#c3d6ef"></div>
<div class="h" style="left:0.0px;top:0;width:96.8px;height:25.5px;line-height:26.9px;">月份</div>
<div class="h" style="left:96.8px;top:0;width:220.1px;height:25.5px;line-height:26.9px;border-left:1px solid rgba(255,255,255,.55);">珠三角其他园区</div>
<div class="h" style="left:316.9px;top:0;width:428.0px;height:25.5px;line-height:26.9px;border-left:1px solid rgba(255,255,255,.55);">区间（珠三角其他园区出现次数）</div>
<div class="h" style="left:744.9px;top:0;width:245.7px;height:25.5px;line-height:26.9px;border-left:1px solid rgba(255,255,255,.55);">福田园区出现次数</div>
<div class="h" style="left:990.6px;top:0;width:323.5px;height:25.5px;line-height:26.9px;border-left:1px solid rgba(255,255,255,.55);">珠三角其他园区出现次数</div>
<div class="h" style="left:1314.1px;top:0;width:116.9px;height:25.5px;line-height:26.9px;border-left:1px solid rgba(255,255,255,.55);">车辆数</div>
<div class="abs" style="left:0;top:25.5px;width:1415.4px;height:346.5px;overflow:hidden;background:#fff">
<div class="r" style="top:0.00px;width:1415.4px;height:26.50px;line-height:25.90px">
<div class="c b" style="left:0.0px;width:96.8px;background:#1867c6;">11月</div>
<div class="c" style="left:96.8px;width:220.1px;">东莞园区</div>
<div class="c" style="left:316.9px;width:428.0px;"><span style="letter-spacing:-0.89px">15次及以上</span></div>
<div class="c" style="left:744.9px;width:245.7px;"><span class="l">841</span></div>
<div class="c" style="left:990.6px;width:323.5px;"><span class="l">8814</span></div>
<div class="c" style="left:1314.1px;width:116.9px;"><span class="l">188</span></div>
</div>
<div class="r" style="top:26.50px;width:1415.4px;height:26.00px;line-height:25.40px">
<div class="c b" style="left:0.0px;width:96.8px;background:#1867c6;">11月</div>
<div class="c" style="left:96.8px;width:220.1px;">东莞园区</div>
<div class="c" style="left:316.9px;width:428.0px;"><span style="letter-spacing:-0.11px">[10-15)次</span></div>
<div class="c" style="left:744.9px;width:245.7px;"><span class="l">819</span></div>
<div class="c" style="left:990.6px;width:323.5px;"><span class="l">1063</span></div>
<div class="c" style="left:1314.1px;width:116.9px;"><span class="l">88</span></div>
</div>
<div class="r" style="top:52.50px;width:1415.4px;height:25.00px;line-height:24.40px">
<div class="c b" style="left:0.0px;width:96.8px;background:#1867c6;">11月</div>
<div class="c" style="left:96.8px;width:220.1px;">东莞园区</div>
<div class="c" style="left:316.9px;width:428.0px;"><span style="letter-spacing:-0.16px">[3-5)次</span></div>
<div class="c" style="left:744.9px;width:245.7px;"><span class="l">1266</span></div>
<div class="c" style="left:990.6px;width:323.5px;"><span class="l">660</span></div>
<div class="c" style="left:1314.1px;width:116.9px;"><span class="l">165</span></div>
</div>
<div class="r" style="top:77.50px;width:1415.4px;height:26.00px;line-height:25.40px">
<div class="c b" style="left:0.0px;width:96.8px;background:#1867c6;">11月</div>
<div class="c" style="left:96.8px;width:220.1px;">东莞园区</div>
<div class="c" style="left:316.9px;width:428.0px;"><span style="letter-spacing:-0.08px">[5-10)次</span></div>
<div class="c" style="left:744.9px;width:245.7px;"><span class="l">574</span></div>
<div class="c" style="left:990.6px;width:323.5px;"><span class="l">791</span></div>
<div class="c" style="left:1314.1px;width:116.9px;"><span class="l">115</span></div>
</div>
<div class="r" style="top:103.50px;width:1415.4px;height:26.00px;line-height:25.40px">
<div class="c b" style="left:0.0px;width:96.8px;background:#1867c6;">11月</div>
<div class="c" style="left:96.8px;width:220.1px;">佛山园区</div>
<div class="c" style="left:316.9px;width:428.0px;"><span style="letter-spacing:-0.89px">15次及以上</span></div>
<div class="c" style="left:744.9px;width:245.7px;"><span class="l">243</span></div>
<div class="c" style="left:990.6px;width:323.5px;"><span class="l">1885</span></div>
<div class="c" style="left:1314.1px;width:116.9px;"><span class="l">50</span></div>
</div>
<div class="r" style="top:129.50px;width:1415.4px;height:26.00px;line-height:25.40px">
<div class="c b" style="left:0.0px;width:96.8px;background:#1867c6;">11月</div>
<div class="c" style="left:96.8px;width:220.1px;">佛山园区</div>
<div class="c" style="left:316.9px;width:428.0px;"><span style="letter-spacing:-0.11px">[10-15)次</span></div>
<div class="c" style="left:744.9px;width:245.7px;"><span class="l">42</span></div>
<div class="c" style="left:990.6px;width:323.5px;"><span class="l">196</span></div>
<div class="c" style="left:1314.1px;width:116.9px;"><span class="l">18</span></div>
</div>
<div class="r" style="top:155.50px;width:1415.4px;height:26.00px;line-height:25.40px">
<div class="c b" style="left:0.0px;width:96.8px;background:#1867c6;">11月</div>
<div class="c" style="left:96.8px;width:220.1px;">佛山园区</div>
<div class="c" style="left:316.9px;width:428.0px;"><span style="letter-spacing:-0.16px">[3-5)次</span></div>
<div class="c" style="left:744.9px;width:245.7px;"><span class="l">227</span></div>
<div class="c" style="left:990.6px;width:323.5px;"><span class="l">164</span></div>
<div class="c" style="left:1314.1px;width:116.9px;"><span class="l">41</span></div>
</div>
<div class="r" style="top:181.50px;width:1415.4px;height:26.00px;line-height:25.40px">
<div class="c b" style="left:0.0px;width:96.8px;background:#1867c6;">11月</div>
<div class="c" style="left:96.8px;width:220.1px;">佛山园区</div>
<div class="c" style="left:316.9px;width:428.0px;"><span style="letter-spacing:-0.08px">[5-10)次</span></div>
<div class="c" style="left:744.9px;width:245.7px;"><span class="l">116</span></div>
<div class="c" style="left:990.6px;width:323.5px;"><span class="l">215</span></div>
<div class="c" style="left:1314.1px;width:116.9px;"><span class="l">30</span></div>
</div>
<div class="r" style="top:207.50px;width:1415.4px;height:25.00px;line-height:24.40px">
<div class="c b" style="left:0.0px;width:96.8px;background:#1867c6;">11月</div>
<div class="c" style="left:96.8px;width:220.1px;">广州园区</div>
<div class="c" style="left:316.9px;width:428.0px;"><span style="letter-spacing:-0.89px">15次及以上</span></div>
<div class="c" style="left:744.9px;width:245.7px;"><span class="l">538</span></div>
<div class="c" style="left:990.6px;width:323.5px;"><span class="l">3547</span></div>
<div class="c" style="left:1314.1px;width:116.9px;"><span class="l">104</span></div>
</div>
<div class="r" style="top:232.50px;width:1415.4px;height:26.00px;line-height:25.40px">
<div class="c b" style="left:0.0px;width:96.8px;background:#1867c6;">11月</div>
<div class="c" style="left:96.8px;width:220.1px;">广州园区</div>
<div class="c" style="left:316.9px;width:428.0px;"><span style="letter-spacing:-0.11px">[10-15)次</span></div>
<div class="c" style="left:744.9px;width:245.7px;"><span class="l">979</span></div>
<div class="c" style="left:990.6px;width:323.5px;"><span class="l">788</span></div>
<div class="c" style="left:1314.1px;width:116.9px;"><span class="l">66</span></div>
</div>
<div class="r" style="top:258.50px;width:1415.4px;height:26.00px;line-height:25.40px">
<div class="c b" style="left:0.0px;width:96.8px;background:#1867c6;">11月</div>
<div class="c" style="left:96.8px;width:220.1px;">广州园区</div>
<div class="c" style="left:316.9px;width:428.0px;"><span style="letter-spacing:-0.16px">[3-5)次</span></div>
<div class="c" style="left:744.9px;width:245.7px;"><span class="l">939</span></div>
<div class="c" style="left:990.6px;width:323.5px;"><span class="l">572</span></div>
<div class="c" style="left:1314.1px;width:116.9px;"><span class="l">143</span></div>
</div>
<div class="r" style="top:284.50px;width:1415.4px;height:26.00px;line-height:25.40px">
<div class="c b" style="left:0.0px;width:96.8px;background:#1867c6;">11月</div>
<div class="c" style="left:96.8px;width:220.1px;">广州园区</div>
<div class="c" style="left:316.9px;width:428.0px;"><span style="letter-spacing:-0.08px">[5-10)次</span></div>
<div class="c" style="left:744.9px;width:245.7px;"><span class="l">544</span></div>
<div class="c" style="left:990.6px;width:323.5px;"><span class="l">664</span></div>
<div class="c" style="left:1314.1px;width:116.9px;"><span class="l">101</span></div>
</div>
<div class="r" style="top:310.50px;width:1415.4px;height:26.00px;line-height:25.40px">
<div class="c b" style="left:0.0px;width:96.8px;background:#1867c6;">11月</div>
<div class="c" style="left:96.8px;width:220.1px;">深业U中心</div>
<div class="c" style="left:316.9px;width:428.0px;"><span style="letter-spacing:-0.89px">15次及以上</span></div>
<div class="c" style="left:744.9px;width:245.7px;"><span class="l">2085</span></div>
<div class="c" style="left:990.6px;width:323.5px;"><span class="l">7282</span></div>
<div class="c" style="left:1314.1px;width:116.9px;"><span class="l">237</span></div>
</div>
</div>
<div class="abs" style="left:1415.4px;top:25.5px;width:15.6px;height:346.5px;background:#f1f1f1"></div>
<svg class="abs" style="left:1415.4px;top:25.5px" width="15.6" height="16" viewBox="0 0 15.5 16"><path d="M4.6 11.2L7.8 7.6 11 11.2Z" fill="#a3a3a3"/></svg>
<div class="abs" style="left:1417.4px;top:42.7px;width:12.0px;height:118.7px;background:#c1c1c1"></div>
</div>
<svg class="abs smg" style="left:543px;top:276px" width="30" height="139" viewBox="0 0 30 139"><g fill="none" stroke-width="10.6"><circle cx="11.0" cy="11.2" r="5.30" fill="#e2e3e4" stroke="none"/><circle cx="14.0" cy="126.5" r="5.30" fill="#f1f1f1" stroke="none"/><path d="M11.0 11.2 L11.2 16.1 L11.9 21.0" stroke="#e2e3e4"/><path d="M11.9 21.0 L12.4 25.0 L13.0 29.0 L13.5 33.0 L14.1 37.0" stroke="#efefef"/><path d="M14.1 37.0 L14.7 42.0 L15.2 47.0 L15.7 52.0" stroke="#e3e3e4"/><path d="M15.7 52.0 L16.2 56.3 L16.6 60.7 L17.1 65.0" stroke="#e9e9e9"/><path d="M17.1 65.0 L17.3 70.0 L17.4 75.0 L17.5 80.0" stroke="#f5f5f5"/><path d="M17.5 80.0 L17.6 84.2 L17.6 88.5 L17.7 92.8 L17.3 97.0" stroke="#e1e1e1"/><path d="M17.3 97.0 L16.9 101.3 L16.5 105.7 L16.1 110.0" stroke="#f5f5f5"/><path d="M16.1 110.0 L15.7 114.1 L15.3 118.2 L14.7 122.4 L14.0 126.5" stroke="#f1f1f1"/></g></svg>
<svg class="abs smg" style="left:1214px;top:202px" width="30" height="211" viewBox="0 0 30 211"><g fill="none" stroke-width="9.8"><circle cx="11.6" cy="9.8" r="4.90" fill="#dfe0e1" stroke="none"/><circle cx="18.6" cy="199.5" r="4.90" fill="#f5f5f5" stroke="none"/><path d="M11.6 9.8 L11.6 13.8 L11.7 17.9 L11.7 21.9 L11.7 26.0 L11.7 30.0" stroke="#dfe0e1"/><path d="M11.7 30.0 L11.8 34.6 L11.8 39.2 L12.0 43.8 L12.1 48.4 L12.2 53.0" stroke="#e5e5e5"/><path d="M12.2 53.0 L12.3 57.0 L12.4 61.0 L12.5 65.0 L12.2 69.0 L12.0 73.0" stroke="#dedede"/><path d="M12.0 73.0 L11.8 78.0 L11.5 83.0 L11.3 88.0" stroke="#fafafa"/><path d="M11.3 88.0 L11.1 93.0 L11.0 98.0 L10.9 103.0" stroke="#e2e2e2"/><path d="M10.9 103.0 L10.8 108.0 L10.7 113.0 L10.6 118.0" stroke="#f3f3f3"/><path d="M10.6 118.0 L10.5 122.0 L10.4 126.0 L10.5 130.0 L10.7 134.0 L10.9 138.0" stroke="#e4e4e4"/><path d="M10.9 138.0 L11.2 142.0 L11.4 146.0 L11.6 150.0 L11.8 154.0 L12.0 158.0" stroke="#f4f4f4"/><path d="M12.0 158.0 L12.2 162.0 L12.4 166.0 L13.0 170.0 L13.5 174.0 L14.2 178.0" stroke="#e6e6e6"/><path d="M14.2 178.0 L14.8 182.3 L15.4 186.6 L16.1 190.9 L17.1 195.2 L18.6 199.5" stroke="#f5f5f5"/></g></svg>
<svg class="abs smg" style="left:1218px;top:205px" width="16" height="8" viewBox="0 0 16 8"><path d="M2.8 6.2Q2.8 2 7.7 2 12.6 2 12.6 6.2Z" fill="#8ab3e6"/></svg>
<svg class="abs smg" style="left:1318px;top:200px" width="60" height="24" viewBox="0 0 60 24"><path d="M4 7.5Q10 3.5 18 5.5 24 2.5 31 4.5 42 4 50 7.5 55 10 54 15L50 17.5 30 17 12 17.5 6 14Z" fill="#ebebeb"/><path d="M4 7.5Q10 3.5 18 5.5 24 2.5 31 4.5 42 4 50 7.5L51 10 28 10.5 8 10.5Z" fill="#8fb6e8"/></svg>
<svg class="abs smg" style="left:538px;top:866px" width="60" height="20" viewBox="0 0 60 20"><path d="M4 8Q8 3 16 4.5 28 3.5 40 5 47 6 49 10L46 15 30 16 12 15.5 5 13Z" fill="#f0f0f0"/><path d="M14 5H32V14H14Z" fill="#e4e4e4"/></svg>
</body></html>
